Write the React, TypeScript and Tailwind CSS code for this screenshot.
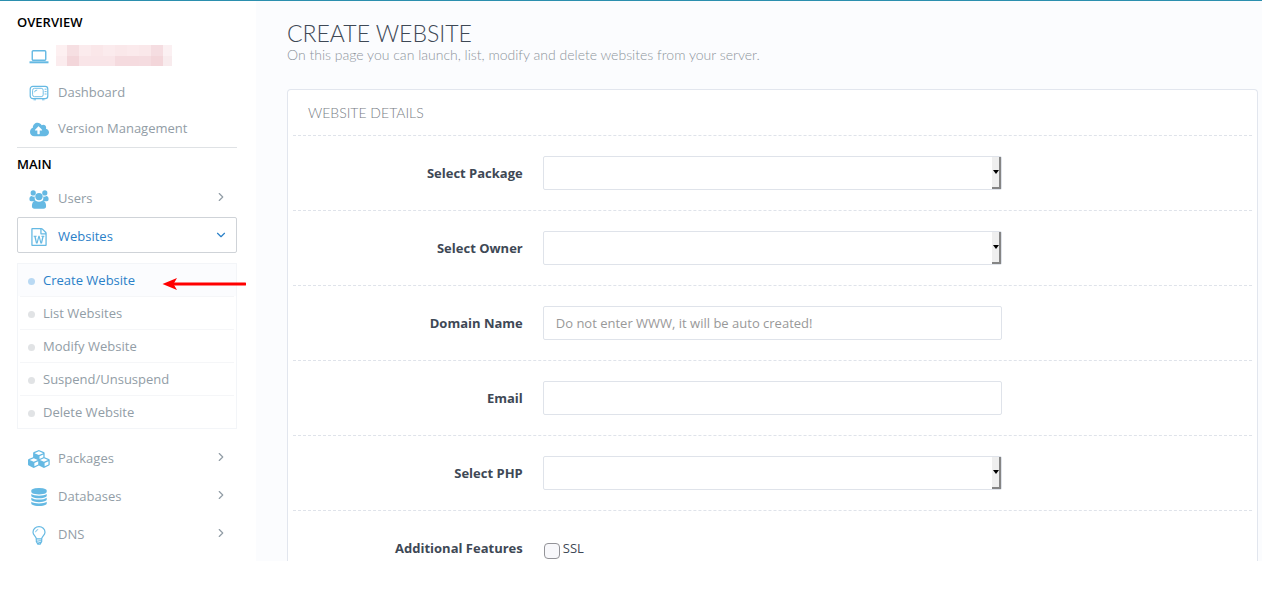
import type { ReactNode } from "react";
import { FaCloudUploadAlt } from "react-icons/fa";
import { ChevronDown, ChevronRight } from "lucide-react";

const LaptopIcon = () => (
  <svg viewBox="0 0 20 14" className="h-[14px] w-5" fill="none" stroke="currentColor">
    <rect x="3.25" y="0.75" width="13.5" height="9.5" rx="1" strokeWidth="1.4" />
    <path d="M0.5 12.3h19" strokeWidth="2" />
  </svg>
);

const TvIcon = () => (
  <svg viewBox="0 0 20 16" className="h-4 w-5" fill="none" stroke="currentColor">
    <rect x="1.2" y="1.3" width="17.6" height="12.4" rx="2.6" strokeWidth="1.2" />
    <rect x="3.6" y="3.3" width="10.6" height="8.4" rx="2" strokeWidth="0.9" />
    <path d="M5.6 7.2q0-2.1 2.6-2.1M15.6 4.2h2M15.6 6.6h2M15.6 9h2M4.5 14.8h2.5M13 14.8h2.5" strokeWidth="0.9" />
  </svg>
);

const UsersIcon = () => (
  <svg viewBox="0 0 20 19" className="h-[19px] w-5" fill="currentColor">
    <circle cx="4.2" cy="2.9" r="2.6" />
    <circle cx="15.8" cy="2.9" r="2.6" />
    <path d="M0.4 9.2q0-3 2.3-3.2 1.4 1 3 .5-.5 3 1 4.7H2q-1.6 0-1.6-2zM19.6 9.2q0-3-2.3-3.2-1.4 1-3 .5.5 3-1 4.7H18q1.6 0 1.6-2z" />
    <circle cx="10" cy="6.6" r="3.7" />
    <path d="M2.9 16q0-4.900 3.700-5.300 3.400 2 6.800 0 3.700.4 3.700 5.300 0 2.700-2.600 2.700h-9q-2.600 0-2.600-2.700z" />
  </svg>
);

const WordIcon = () => (
  <svg viewBox="0 0 1792 1792" className="size-[18px]" fill="currentColor">
    <path d="M1596 380q28 28 48 76t20 88v1152q0 40-28 68t-68 28h-1344q-40 0-68-28t-28-68v-1600q0-40 28-68t68-28h896q40 0 88 20t76 48zm-444-244v376h376q-10-29-22-41l-313-313q-12-12-41-22zm384 1528v-1024h-416q-40 0-68-28t-28-68v-416h-768v1536h1280zm-1175-896v107h70l164 661h159l128-485q7-20 10-46 2-16 2-24h4l3 24q1 3 3.5 20t5.5 26l128 485h159l164-661h70v-107h-300v107h90l-99 438q-5 20-7 46l-2 21h-4q0-3-.5-6.5t-1.500-8-1-6.500q-1-5-4-21t-5-25l-144-545h-114l-144 545q-2 9-4.500 24.500t-3.500 21.500l-4 21h-4l-2-21q-2-26-7-46l-99-438h90v-107h-300z" />
  </svg>
);

const CubesIcon = () => (
  <svg viewBox="0 0 2304 1792" className="h-[18px] w-[23px]" fill="currentColor">
    <path d="M640 1632l384-192v-314l-384 164v342zm-64-454l404-173-404-173-404 173zm1088 454l384-192v-314l-384 164v342zm-64-454l404-173-404-173-404 173zm-448-293l384-165v-266l-384 164v267zm-64-379l441-189-441-189-441 189zm1088 518v416q0 36-19 67t-52 47l-448 224q-25 14-57 14t-57-14l-448-224q-4-2-7-4-2 2-7 4l-448 224q-25 14-57 14t-57-14l-448-224q-33-16-52-47t-19-67v-416q0-38 21.500-70t56.500-48l434-186v-400q0-38 21.500-70t56.500-48l448-192q23-10 50-10t50 10l448 192q35 16 56.500 48t21.500 70v400l434 186q36 16 57 48t21 70z" />
  </svg>
);

const DatabaseIcon = () => (
  <svg viewBox="0 0 1792 1792" className="size-[18px]" fill="currentColor">
    <path d="M896 768q237 0 443-43t325-127v170q0 69-103 128t-280 93.500-385 34.500-385-34.500-280-93.500-103-128v-170q119 84 325 127t443 43zm0 768q237 0 443-43t325-127v170q0 69-103 128t-280 93.500-385 34.500-385-34.500-280-93.500-103-128v-170q119 84 325 127t443 43zm0-384q237 0 443-43t325-127v170q0 69-103 128t-280 93.500-385 34.500-385-34.500-280-93.500-103-128v-170q119 84 325 127t443 43zm0-1152q208 0 385 34.500t280 93.500 103 128v128q0 69-103 128t-280 93.500-385 34.500-385-34.500-280-93.500-103-128v-128q0-69 103-128t280-93.500 385-34.500z" />
  </svg>
);

const BulbIcon = () => (
  <svg viewBox="0 0 14 19" className="h-[19px] w-[14px]" fill="none" stroke="currentColor">
    <path d="M4.300 12.800C4.100 10.300 1 9.300 1 6.200a6 5.500 0 0 1 12 0c0 3.100-3.100 4.100-3.300 6.600z" strokeWidth="1.200" />
    <path d="M3.600 6.200q.2-2.300 2.600-2.700" strokeWidth="0.900" />
    <path d="M4.300 13v2.600l1.500 2.500h2.400l1.500-2.500V13M4.500 15.300l5-.8M5.400 17.200l3.500-1" strokeWidth="1.100" />
  </svg>
);

const CENSOR = [
  ["#fdf0f1", "#f6dfe2", "#fbebed", "#fae7e9", "#fbebed", "#fae8ea", "#fbeaec", "#fae8ea", "#f5dde1", "#fbf0f2"],
  ["#fbecee", "#f3d6da", "#f9e5e8", "#f9e5e8", "#f9e5e8", "#f5dbdf", "#f5dbdf", "#f5dce0", "#f3d6da", "#f8ebed"],
];

const RedactedAddress = () => (
  <svg viewBox="0 0 116 21" className="h-[21px] w-[116px]" shapeRendering="crispEdges">
    {CENSOR.map((row, y) =>
      row.map((fill, x) => (
        <rect key={`${x}-${y}`} x={x === 0 ? 0 : x * 12 - 1} y={y * 11} width="12" height="11" fill={fill} />
      )),
    )}
  </svg>
);

function MenuItem({ icon, label, expandable, open }: { icon: ReactNode; label: ReactNode; expandable?: boolean; open?: boolean }) {
  return (
    <a
      href="#"
      className={
        open
          ? "flex h-9 items-center rounded-xs border border-[#cfd3d8] pt-1 pr-2 pl-[9px] text-[#2a80c8]"
          : "flex h-9 items-center border border-transparent pt-1 pr-2 pl-[9px] text-[#929da6]"
      }
    >
      <span className="flex w-6 shrink-0 justify-center text-[#65b9e3]">{icon}</span>
      <span className="ml-[7px] flex-1">{label}</span>
      {expandable && (
        <span className="pb-1">{open ? <ChevronDown size={14} strokeWidth={2} /> : <ChevronRight size={14} strokeWidth={2} />}</span>
      )}
    </a>
  );
}

const SUB_ITEMS = ["Create Website", "List Websites", "Modify Website", "Suspend/Unsuspend", "Delete Website"];

function Sidebar() {
  return (
    <nav className="w-64 shrink-0 bg-white pt-[11px] pr-[19px] pl-[17px]">
      <h2 className="leading-5 font-semibold text-black">OVERVIEW</h2>
      <div className="mt-[5px] border-b border-[#dfe2e5] pb-0.5">
        <MenuItem icon={<LaptopIcon />} label={<span className="-ml-0.5 block pb-1"><RedactedAddress /></span>} />
        <MenuItem icon={<TvIcon />} label="Dashboard" />
        <MenuItem icon={<FaCloudUploadAlt size={19} />} label="Version Management" />
      </div>
      <h2 className="mt-[6px] leading-5 font-semibold text-black">MAIN</h2>
      <div className="mt-[5px] flex flex-col gap-0.5">
        <MenuItem icon={<UsersIcon />} label="Users" expandable />
        <MenuItem icon={<WordIcon />} label="Websites" expandable open />
        <div className="relative my-2">
          <ul className="border border-[#f3f5f8]">
            {SUB_ITEMS.map((item, i) => (
              <li key={item} className={i === 0 ? "bg-[#fbfcfe]" : "mx-0.5 border-t border-[#f5f6f8]"}>
                <a
                  href="#"
                  className={
                    i === 0
                      ? "flex h-8 items-center pt-0.5 pl-[10px] text-[#2a80c8]"
                      : "flex h-8 items-center pt-0.5 pl-2 text-[#929da6]"
                  }
                >
                  <span className={i === 0 ? "mr-2 size-[7px] rounded-full bg-[#b9d9f3]" : "mr-2 size-[7px] rounded-full bg-[#e1e3e5]"} />
                  {item}
                </a>
              </li>
            ))}
          </ul>
          <svg viewBox="0 0 84 14" className="absolute top-[14px] left-[145px] h-[14px] w-[84px]">
            <path d="M10 7h73" stroke="#f00" strokeWidth="3" strokeLinecap="round" />
            <path d="M0.500 7L15 1l-3.500 6L15 13z" fill="#f00" />
          </svg>
        </div>
        <MenuItem icon={<CubesIcon />} label="Packages" expandable />
        <MenuItem icon={<DatabaseIcon />} label="Databases" expandable />
        <MenuItem icon={<BulbIcon />} label="DNS" expandable />
      </div>
    </nav>
  );
}

function Row({ id, label, last, children }: { id: string; label: string; last?: boolean; children: ReactNode }) {
  return (
    <div
      className={
        last
          ? "grid grid-cols-12 pt-5 pb-0.5 text-[#3e4855]"
          : "grid grid-cols-12 border-b border-dashed border-[#dfe3ea] py-5 text-[#3e4855]"
      }
    >
      <label htmlFor={id} className="col-span-3 pt-2 pr-[10px] text-right leading-[18px] font-bold">
        {label}
      </label>
      <div className="col-span-6 px-[10px]">{children}</div>
    </div>
  );
}

function SelectBox({ id }: { id: string }) {
  return (
    <div className="relative">
      <select id={id} className="block h-[34px] w-full appearance-none rounded-xs border border-[#dfe3ea] bg-white px-3" />
      <span className="pointer-events-none absolute top-px right-px flex h-8 w-[9px] items-center justify-center border-r-2 border-b-2 border-[#858585] bg-[#efefef]">
        <svg viewBox="0 0 6 4" className="h-1 w-1.5 shrink-0">
          <path d="M0 0h6L3 4z" fill="#000" />
        </svg>
      </span>
    </div>
  );
}

const inputClass =
  "block h-[34px] w-full rounded-xs border border-[#dfe3ea] bg-white px-3 text-[13px] placeholder:text-[#999] placeholder:opacity-100";

export default function App() {
  return (
    <div className="border-t border-[#2b8fae] bg-white font-['Open_Sans',sans-serif] text-[13px]">
      <div className="flex">
        <Sidebar />
        <main className="min-w-0 flex-1 bg-[#fbfcfe] pt-5 pr-1 pl-[31px]">
          <h1 className="font-['Lato',sans-serif] text-[23px] leading-6 font-light text-[#3e4855]">CREATE WEBSITE</h1>
          <p className="font-['Lato',sans-serif] text-[14px] leading-5 font-light text-[#8d949c]">
            On this page you can launch, list, modify and delete websites from your server.
          </p>
          <form className="mt-6 rounded-t-sm border border-b-0 border-[#e2e6ee] bg-white px-[5px]">
            <h2 className="border-b border-dashed border-[#dfe3ea] py-3 pl-[15px] font-['Lato',sans-serif] text-[14px] leading-[21px] font-light text-[#777d84]">
              WEBSITE DETAILS
            </h2>
            <Row id="package" label="Select Package">
              <SelectBox id="package" />
            </Row>
            <Row id="owner" label="Select Owner">
              <SelectBox id="owner" />
            </Row>
            <Row id="domain" label="Domain Name">
              <input id="domain" type="text" placeholder="Do not enter WWW, it will be auto created!" className={inputClass} />
            </Row>
            <Row id="email" label="Email">
              <input id="email" type="email" className={inputClass} />
            </Row>
            <Row id="php" label="Select PHP">
              <SelectBox id="php" />
            </Row>
            <Row id="ssl" label="Additional Features" last>
              <div className="flex pt-2">
                <input
                  id="ssl"
                  type="checkbox"
                  className="mt-1 ml-px size-4 appearance-none rounded-sm border border-[#939398] bg-[#f8f8fb] checked:bg-[#2a80c8]"
                />
                <label htmlFor="ssl" className="ml-[3px] leading-[18px]">SSL</label>
              </div>
            </Row>
          </form>
        </main>
      </div>
    </div>
  );
}
